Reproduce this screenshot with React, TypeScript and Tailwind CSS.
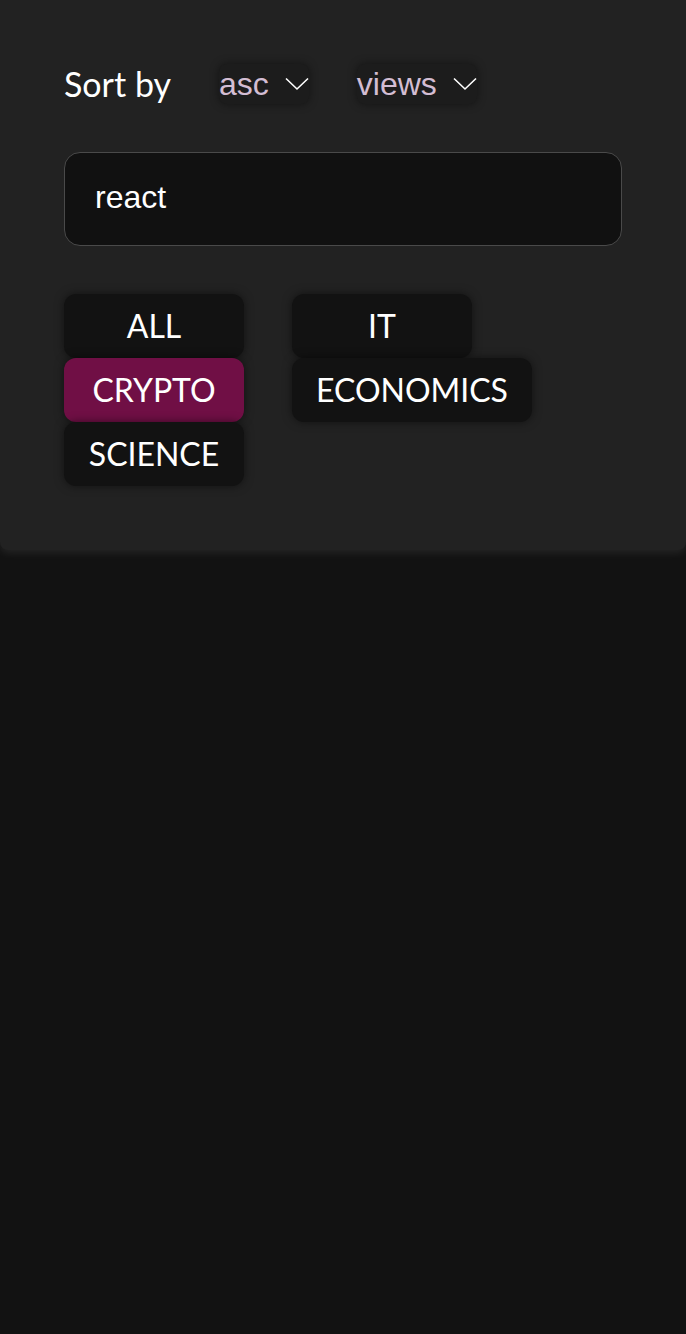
import { useState } from "react"

const categories = ["ALL", "IT", "CRYPTO", "ECONOMICS", "SCIENCE"]

function Chevron() {
  return (
    <svg width="24" height="14" viewBox="0 0 24 14" fill="none" className="shrink-0">
      <path d="M1 1.5 L12 12 L23 1.5" stroke="#ffffff" strokeWidth="1.6" />
    </svg>
  )
}

function SortSelect({ value }: { value: string }) {
  return (
    <div className="flex h-10 items-center gap-4 rounded-lg bg-[#1c1c1c] shadow-[0_0_10px_rgba(0,0,0,0.45)]">
      <span className="text-[32px] leading-none text-[#d3bdd3] font-['Liberation_Sans',Arial,sans-serif]">{value}</span>
      <Chevron />
    </div>
  )
}

export default function App() {
  const [active, setActive] = useState("CRYPTO")
  const [query, setQuery] = useState("react")

  return (
    <div className="min-h-[1334px] bg-[#121212] font-['Lato','Noto_Sans',sans-serif]">
      <section className="flex flex-col gap-12 rounded-b-lg bg-[#222222] p-16 shadow-[0_3px_8px_rgba(255,255,255,0.08)]">
        {/* Sort controls */}
        <div className="flex items-center gap-12">
          <span className="text-[34px] leading-none text-white">Sort by</span>
          <SortSelect value="asc" />
          <SortSelect value="views" />
        </div>

        {/* Search */}
        <input
          value={query}
          onChange={(e) => setQuery(e.target.value)}
          className="h-[94px] w-full rounded-2xl border border-[#4a4a4a] bg-[#111111] px-[30px] pb-1 text-[32px] text-white outline-none font-['Liberation_Sans',Arial,sans-serif]"
        />

        {/* Categories */}
        <div className="grid grid-cols-[max-content_max-content] justify-start justify-items-start gap-x-12">
          {categories.map((c) => (
            <button
              key={c}
              onClick={() => setActive(c)}
              className={`h-16 min-w-[180px] rounded-xl px-6 text-[32px] leading-none text-white shadow-[0_0_10px_rgba(0,0,0,0.5)] ${
                active === c ? "bg-[#700f45]" : "bg-[#121212]"
              }`}
            >
              {c}
            </button>
          ))}
        </div>
      </section>
    </div>
  )
}
